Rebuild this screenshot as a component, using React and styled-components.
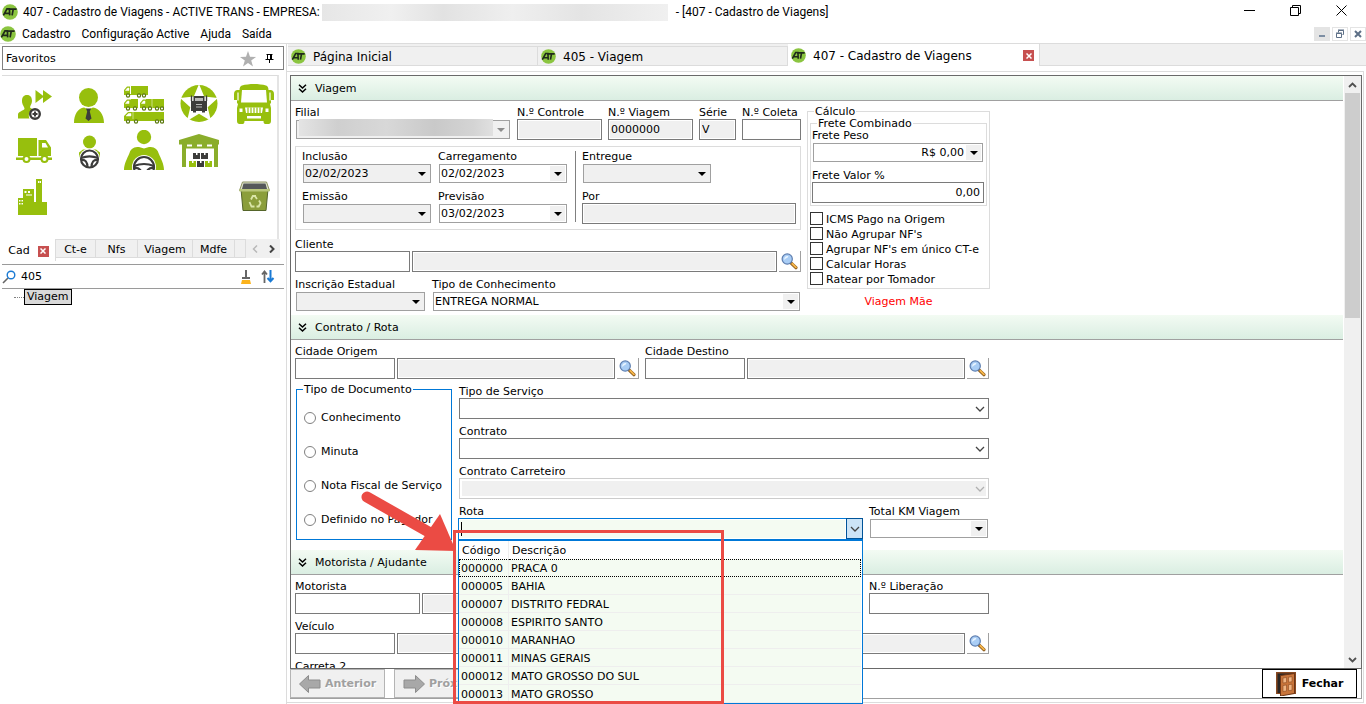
import React, { useState } from 'react'
import styled, { createGlobalStyle, css } from 'styled-components'

const GlobalStyle = createGlobalStyle`
  * {
    box-sizing: border-box;
  }
  body {
    margin: 0;
    background: #fff;
    color: #000;
    font-family: 'DejaVu Sans', Verdana, sans-serif;
    font-size: 11px;
    line-height: 14px;
    font-variant-ligatures: none;
  }
  button, input, select {
    font: inherit;
    color: inherit;
    border-radius: 0;
  }
  button {
    padding: 0;
    border: 0;
    background: none;
  }
`;

const Window = styled.div`
  position: relative;
  display: flex;
  flex-direction: column;
  height: 100vh;
  overflow: hidden;
`;

/* ---- title and menu ---- */

const TitleBar = styled.header`
  display: flex;
  align-items: center;
  height: 24px;
  padding-left: 2px;
  font-family: Roboto, 'Segoe UI', sans-serif;
  font-size: 12px;
  white-space: pre;
`;
const TitleText = styled.span`
  margin-left: 5px;
`;
const Redacted = styled.span`
  width: ${p => p.$width}px;
  height: 17px;
  margin: 0 8px 0 2px;
  background: linear-gradient(90deg, #e6e6e6, #f0f0f0 20%, #e2e2e2 35%, #efefef 55%, #e4e4e4 75%, #f0f0f0);
`;
const WindowButtons = styled.div`
  display: flex;
  align-self: flex-start;
  margin-left: auto;
  padding-right: 2px;
`;
const WindowButton = styled.button`
  display: flex;
  align-items: center;
  justify-content: center;
  width: 46px;
  height: 20px;
`;
const MenuBar = styled.nav`
  display: flex;
  align-items: center;
  height: 19px;
  font-family: Roboto, 'Segoe UI', sans-serif;
  font-size: 12px;
`;
const MenuItem = styled.button`
  margin-left: ${p => (p.$first ? 6 : 11)}px;
`;
const ChildButtons = styled.div`
  display: flex;
  gap: 2px;
  margin-left: auto;
`;
const ChildButton = styled.button`
  display: flex;
  align-items: center;
  justify-content: center;
  width: 16px;
  height: 14px;
  border: 1px solid #e4e4e4;
  background: ${p => (p.$filled ? '#e4e4e4' : '#fff')};
`;

const Body = styled.div`
  display: flex;
  flex: 1;
  min-height: 0;
  border-top: 1px solid #dcdcdc;
`;

/* ---- sidebar ---- */

const Sidebar = styled.aside`
  display: flex;
  flex-direction: column;
  flex: none;
  width: 287px;
  padding: 2px 2px 0;
  border-right: 1px solid #dcdcdc;
`;
const FavHeader = styled.div`
  display: flex;
  align-items: center;
  gap: 9px;
  width: 282px;
  height: 24px;
  padding: 1px 9px 0 3px;
  border: 1px solid #808080;

  span {
    flex: 1;
  }
`;
const IconPanel = styled.div`
  display: grid;
  grid-template-columns: repeat(5, 55px);
  grid-template-rows: repeat(3, 46px);
  width: 277px;
  height: 164px;
  margin-top: 5px;
  padding: 5px 0 0 4px;
  border-top: 1px solid #dcdcdc;
  border-right: 2px solid #e4e4e4;
`;
const FavButton = styled.button`
  display: flex;
  align-items: center;
  justify-content: center;
  grid-column: ${p => p.$col};
`;
const SideTabs = styled.div`
  display: flex;
  align-items: flex-start;
  height: 20px;
  width: 278px;
`;
const SideTab = styled.button`
  display: flex;
  align-items: center;
  justify-content: center;
  gap: 8px;
  height: ${p => (p.$active ? 22 : 19)}px;
  width: ${p => p.$width}px;
  padding-top: 2px;
  border: 1px solid #dcdcdc;
  border-width: ${p => (p.$active ? '0 1px 0 0' : '1px 1px 1px 0')};
  background: ${p => (p.$active ? '#fff' : '#f0f0f0')};
`;
const SideArrows = styled.div`
  display: flex;
  align-items: center;
  justify-content: space-around;
  flex: 1;
  height: 19px;
  background: #f0f0f0;
`;
const SearchBox = styled.label`
  display: flex;
  align-items: center;
  gap: 5px;
  width: 282px;
  height: 25px;
  margin-top: 5px;
  padding-right: 8px;
  border: 1px solid #9a9a9a;
  border-width: 1px 0;

  input {
    flex: 1;
    min-width: 0;
    padding: 0;
    border: 0;
    outline: 0;
  }
`;
const Tree = styled.div`
  display: flex;
  align-items: center;
  padding-left: 12px;

  &::before {
    content: '';
    width: 10px;
    border-top: 1px dotted #808080;
  }
`;
const TreeNode = styled.button`
  padding: 0 2px;
  border: 1px solid #000;
  background: #d9d9d9;
`;

/* ---- main panel ---- */

const Main = styled.main`
  display: flex;
  flex-direction: column;
  flex: 1;
  min-width: 0;
`;
const DocTabs = styled.div`
  display: flex;
  align-items: flex-start;
  flex: none;
  height: 22px;
  margin-left: 1px;
  background: #f0f0f0;
  border-bottom: 1px solid #dcdcdc;
`;
const DocTab = styled.button`
  display: flex;
  align-items: center;
  gap: 7px;
  width: ${p => (p.$active ? 252 : 250)}px;
  height: ${p => (p.$active ? 22 : 19)}px;
  margin-top: ${p => (p.$active ? 0 : 2)}px;
  padding: 1px 5px 0 3px;
  border: 1px solid #dcdcdc;
  border-width: ${p => (p.$active ? '0 1px 0 0' : '1px 1px 0 0')};
  background: ${p => (p.$active ? '#fff' : '#f0f0f0')};
  font-size: 12px;

  span {
    flex: 1;
    text-align: left;
  }
`;
const CloseMark = styled.i`
  display: flex;
  align-items: center;
  justify-content: center;
  width: 11px;
  height: 11px;
  background: #c75050;
`;
const Panel = styled.section`
  display: flex;
  flex-direction: column;
  flex: 1;
  min-height: 0;
  margin: 5px 2px 1px -1px;
  padding: 3px 1px 3px 3px;
  border: 1px solid #dcdcdc;
`;
const FormFrame = styled.div`
  display: flex;
  flex: 1;
  min-height: 0;
  border: 1px solid #696969;
`;
const FormScroll = styled.form`
  flex: 1;
  min-width: 0;
  overflow: hidden;
`;
const ScrollBar = styled.div`
  display: flex;
  flex-direction: column;
  width: 17px;
  margin-left: 1px;
  background: #f0f0f0;

  button {
    height: 17px;
  }
  div {
    height: 38%;
    margin: 0 1px auto;
    background: #cdcdcd;
  }
`;
const SectionHead = styled.h2`
  display: flex;
  align-items: center;
  gap: 8px;
  height: 25px;
  margin: 0;
  padding: 1px 0 0 7px;
  border-bottom: 1px solid #a0a0a0;
  background: linear-gradient(#f3fbf3, #daeee2);
  font-size: 11px;
  font-weight: normal;
`;
const SectionBody = styled.div`
  display: flex;
  flex-direction: column;
  gap: 5px;
  width: 702px;
  padding: 4px 4px ${p => p.$bottom || 0}px;
`;
const Row = styled.div`
  display: flex;
  gap: ${p => p.$gap ?? 6}px;
`;
const Column = styled.div`
  display: flex;
  flex-direction: column;
  align-self: flex-start;
  gap: 5px;
  width: ${p => (p.$width ? `${p.$width}px` : 'auto')};
  flex: ${p => (p.$width ? 'none' : 1)};
  min-width: 0;
`;
const FieldBox = styled.div`
  display: flex;
  flex-direction: column;
  width: ${p => (p.$width ? `${p.$width}px` : 'auto')};
  flex: ${p => (p.$width ? 'none' : '1 1 auto')};
  min-width: 0;

  label {
    position: relative;
    height: 14px;
    padding-top: 1px;
    white-space: nowrap;
  }
`;
const TextBox = styled.input`
  height: 21px;
  width: ${p => (p.$width ? `${p.$width}px` : '100%')};
  flex: ${p => (p.$width ? 'none' : '1 1 auto')};
  min-width: 0;
  padding: 0 3px;
  border: 1px solid #7a7a7a;
  background: #fff;
  text-align: ${p => (p.$right ? 'right' : 'left')};
  outline: 0;
  ${p => p.readOnly && css`
    padding: 0 2px;
    background: #f0f0f0;
    box-shadow: inset 0 0 0 1px #fff;
  `}
`;
const SelectFrame = styled.span`
  position: relative;
  display: block;
  height: ${p => (p.$native ? 21 : 19)}px;
  margin: ${p => (p.$native ? 0 : 1)}px;

  select {
    appearance: none;
    display: block;
    width: 100%;
    height: 100%;
    padding: 0 ${p => (p.$right ? 18 : 3)}px 0 1px;
    border: 1px solid ${p => (p.$native ? (p.$off ? '#cccccc' : '#7a7a7a') : '#a0a0a0')};
    background: ${p => (p.$off ? '#f0f0f0' : '#fff')};
    box-shadow: ${p => (p.$native && p.$off ? 'inset 0 0 0 2px #fff' : 'none')};
    text-align-last: ${p => (p.$right ? 'right' : 'left')};
    opacity: 1;
    outline: 0;
  }
`;
const DropMark = styled.span`
  position: absolute;
  top: 2px;
  right: 2px;
  bottom: 2px;
  display: flex;
  align-items: center;
  justify-content: center;
  width: 15px;
  background: ${p => (p.$plain ? 'none' : '#f0f0f0')};
  pointer-events: none;
`;
const Blurred = styled.span`
  position: absolute;
  top: -1px;
  left: 3px;
  right: 17px;
  height: 17px;
  background: linear-gradient(90deg, #e4e4e4, #cfcfcf 20%, #d8d8d8 45%, #c9c9c9 70%, #d4d4d4 90%, #e0e0e0);
`;
const LookupButton = styled.button`
  display: flex;
  align-items: center;
  justify-content: center;
  flex: none;
  width: 22px;
  height: 21px;
  border: 1px solid #a0a0a0;
  border-width: 0 1px 1px 0;
`;
const Box = styled.div`
  display: flex;
  gap: 6px;
  height: 84px;
  margin: 1px 0 2px;
  padding: 2px 4px 0 6px;
  border: 1px solid #dcdcdc;
`;
const Divider = styled.i`
  width: 1px;
  height: 71px;
  margin: 2px 0 0 1px;
  background: #808080;
`;
const Group = styled.fieldset`
  position: relative;
  min-width: 0;
  margin: ${p => p.$margin || 0};
  padding: ${p => p.$pad};
  border: 1px solid ${p => p.$color || '#dcdcdc'};

  > legend {
    position: absolute;
    top: -6px;
    left: 6px;
    padding: 0 1px;
    background: #fff;
    line-height: 12px;
    white-space: nowrap;
  }
`;
const CheckList = styled.div`
  margin-top: 6px;
`;
const CheckLine = styled.label`
  display: flex;
  align-items: flex-end;
  gap: 3px;
  height: 15px;
  white-space: nowrap;

  input {
    appearance: none;
    flex: none;
    align-self: flex-start;
    width: 13px;
    height: 13px;
    margin: 0;
    border: 1px solid #333;
    background: #fff;
  }
`;
const RadioLine = styled.label`
  display: flex;
  align-items: center;
  gap: 5px;
  height: 34px;
  white-space: nowrap;

  input {
    appearance: none;
    flex: none;
    width: 12px;
    height: 12px;
    margin: 0;
    border: 1px solid #808080;
    border-radius: 50%;
  }
`;
const RedNote = styled.div`
  margin-top: 6px;
  color: #ff0000;
  text-align: center;
`;

/* ---- route combo ---- */

const RouteArea = styled.div`
  margin-left: -1px;
`;
const RouteCombo = styled.div`
  display: flex;
  position: relative;
  height: 22px;
  border: 1px solid #0078d7;

  input {
    flex: 1;
    min-width: 0;
    padding: 0 2px;
    border: 1px solid #fff;
    background: #f4fbf2;
    outline: 0;
  }
  button {
    width: 17px;
    margin: -1px -1px 0 0;
    border: 1px solid #005499;
    background: #cce4f7;
  }
`;
const Caret = styled.i`
  position: absolute;
  top: 3px;
  left: 2px;
  width: 1px;
  height: 14px;
  background: #000;
`;
const Popup = styled.div`
  position: absolute;
  z-index: 2;
  width: 405px;
  border: 1px solid #0078d7;
  background: #fff;
`;
const PopupAnchor = styled.div`
  height: 0;
`;
const RouteTable = styled.table`
  width: 402px;
  border-collapse: separate;
  border-spacing: 0;
  table-layout: fixed;

  th, td {
    height: 18px;
    padding: 2px 2px 0;
    border-bottom: 1px solid #eeeeee;
    font-weight: normal;
    text-align: left;
    white-space: nowrap;
  }
  th {
    padding: 2px 3px 0;
    border-bottom-color: #fff;
  }
  th:first-child, td:first-child {
    width: 50px;
    border-right: 1px solid #eeeeee;
  }
  td {
    background: #f4fbf2;
  }
  tbody tr:first-child td {
    padding-top: 1px;
    border-top: 1px dotted #000;
    border-bottom: 1px dotted #000;
  }
  tbody tr:first-child td:first-child {
    border-left: 1px dotted #000;
    padding-left: 1px;
  }
  tbody tr:first-child td:last-child {
    border-right: 1px dotted #000;
  }
`;
const Highlight = styled.div`
  position: absolute;
  top: -11px;
  left: -6px;
  width: 271px;
  height: 174px;
  border: 3px solid #eb4b44;
  pointer-events: none;
`;
const ArrowDrawing = styled.svg`
  position: absolute;
  top: -53px;
  left: -102px;
  pointer-events: none;
`;

/* ---- footer ---- */

const Footer = styled.footer`
  display: flex;
  gap: 9px;
  flex: none;
  height: 30px;
  border: 1px solid #a0a0a0;
  border-width: 0 1px 1px 0;
`;
const FooterButton = styled.button`
  display: flex;
  align-items: center;
  justify-content: center;
  gap: 4px;
  width: 95px;
  height: 29px;
  font-weight: bold;
  ${p => p.$close
    ? css`
      gap: 6px;
      margin: 0 4px 0 auto;
      border: 1px solid #000;
      background: #fff;
    `
    : css`
      border: 1px solid #b4b4b4;
      background: #f0f0f0;
      color: #a0a0a0;
      text-shadow: 1px 1px 0 #fff;
    `}
`;

/* ---- drawings ---- */

const GREEN = '#97bf0d'
const DARK = '#3c3c3b'

const Logo = ({ size = 15 }) => (
  <svg width={size} height={size} viewBox="0 0 16 16" aria-hidden="true">
    <circle cx="8" cy="8" r="7.8" fill="#8bc540" />
    <path d="M1.4 11.4 5 4.8h2.4l.3 6.6M3 9.3h4.6M6.4 5.2h8.2M11.2 5.4l-1.1 6" fill="none" stroke="#1f2a1a" strokeWidth="1.7" />
  </svg>
)
const Chevron = ({ color = '#444', size = 10 }) => (
  <svg width={size} height={size / 2 + 1} viewBox="0 0 10 6" aria-hidden="true">
    <path d="M1 1l4 4 4-4" fill="none" stroke={color} strokeWidth="1.3" />
  </svg>
)
const Triangle = ({ color = '#000' }) => (
  <svg width="8" height="4" viewBox="0 0 8 4" aria-hidden="true">
    <path d="M0 0h8L4 4z" fill={color} />
  </svg>
)
const DoubleChevron = () => (
  <svg width="9" height="9" viewBox="0 0 9 9" aria-hidden="true">
    <path d="M1 .8l3.5 3.2L8 .8M1 4.8L4.5 8 8 4.8" fill="none" stroke="#000" strokeWidth="1.5" />
  </svg>
)
const Cross = () => (
  <CloseMark>
    <svg width="6" height="6" viewBox="0 0 6 6" aria-hidden="true">
      <path d="M.5.5l5 5M5.5.5l-5 5" stroke="#fff" strokeWidth="1.5" />
    </svg>
  </CloseMark>
)
const Magnifier = () => (
  <svg width="17" height="17" viewBox="0 0 18 18" aria-hidden="true">
    <path d="M10.8 10.6l5 5" stroke="#8a5a1c" strokeWidth="3.4" strokeLinecap="round" />
    <path d="M12 11.4l3.8 3.8" stroke="#f5b54a" strokeWidth="2" strokeLinecap="round" />
    <circle cx="6.6" cy="6.4" r="5.4" fill="#a9cdf5" stroke="#5f7fb0" strokeWidth="1.3" />
    <path d="M3.4 6.8a3.3 3.3 0 0 1 4-3.6c1 .4-.4 2-1.6 2.4S4 7.6 3.4 6.8z" fill="#e8f4ff" />
  </svg>
)
const FavIcon = ({ children }) => (
  <svg width="40" height="40" viewBox="0 0 40 40" fill={GREEN} aria-hidden="true">{children}</svg>
)
const Wheels = ({ at, y, r = 1.6 }) => at.map(x => (
  <circle key={x} cx={x} cy={y} r={r} fill="#fff" stroke="#5d7a10" strokeWidth="1.2" />
))
const SteeringWheel = ({ cx, cy, r }) => (
  <g fill="none" stroke={DARK} strokeWidth="2.2">
    <circle cx={cx} cy={cy} r={r + 2} fill="#fff" stroke="none" />
    <circle cx={cx} cy={cy} r={r} fill="#fff" />
    <path d={`M${cx - r} ${cy - 1}Q${cx} ${cy - r / 2} ${cx + r} ${cy - 1}M${cx - r} ${cy + 1}Q${cx - 2} ${cy} ${cx - 2} ${cy + r}M${cx + r} ${cy + 1}Q${cx + 2} ${cy} ${cx + 2} ${cy + r}`} />
  </g>
)

const favorites = [
  { name: 'Novo cliente', col: 1, art: (
    <FavIcon>
      <path d="M13 11c3.5 0 5 2.6 5 6 0 3-1.8 4.3-2 6.5l3 2c-4 2-5 6-3.5 9H4v-4c0-3 5-3.5 6.5-5.5C10.5 22.5 8 21 8 17c0-3.5 1.5-6 5-6z" />
      <path d="M21.5 6l8.5 6.5-8.5 6.5zM29 6l9 6.5-9 6.5z" />
      <circle cx="21" cy="30" r="4.8" fill="#fff" stroke={DARK} strokeWidth="2.4" />
      <path d="M18.5 30h5M21 27.5v5" stroke={DARK} strokeWidth="2" />
    </FavIcon>
  ) },
  { name: 'Funcionário', col: 2, art: (
    <FavIcon>
      <circle cx="19.5" cy="13.5" r="9.5" />
      <path d="M5 39c0-9 4-14.5 10-15.5l4.5 2 4.5-2c6 1 11 6.5 11 15.5z" />
      <path d="M17 24.5h5l-1.2 3 1.7 7-3 2.5-3-2.5 1.7-7z" fill={DARK} />
    </FavIcon>
  ) },
  { name: 'Frota', col: 3, art: (
    <FavIcon>
      <path d="M7 2h17v9H0V6l3-3.5h3V10h1zM7 15h7v9H0v-5l3-3.5h4zM22 15h18v9H16v-5l3-3.5h3zM8 28h32v9H0v-5l4-4z" />
      <path d="M1.5 6.5L3.5 4H5v2.500zM1.5 19.5l2-2.5H5v2.500zM17.5 19.5l2-2.5H21v2.500zM2 32l2.5-2.5H7V32zM28 15v9M9 28v7" fill="#fff" stroke="#fff" strokeWidth=".5" />
      <Wheels at={[4, 15, 20]} y={11.5} />
      <Wheels at={[4, 11, 20, 26, 33, 38]} y={24.5} />
      <Wheels at={[4, 12, 33, 38]} y={37.5} />
    </FavIcon>
  ) },
  { name: 'Veículos', col: 4, art: (
    <FavIcon>
      <circle cx="20" cy="19.5" r="18.5" />
      <path d="M20 0l5.2 12.6L39 14l-10.3 9.2L32 37l-12-7.3L8 37l3.3-13.800L1 14l13.8-1.4z" fill="#fff" />
      <path d="M14.5 12h11v5H28v10h-2v1.5h-3V27h-6v1.5h-3V27h-2V17h2.500z" fill={DARK} />
      <path d="M16 14h8v3h-8zM17 20h6v1h-6zM17 22.5h6v1h-6z" fill="#b9b9b9" />
      <path d="M12.5 11.5v5.5M27.5 11.5v5.5" stroke={DARK} strokeWidth="1.4" />
    </FavIcon>
  ) },
  { name: 'Ônibus', col: 5, art: (
    <FavIcon>
      <path d="M8 1.5C15-.5 25-.5 32 1.5c1.5.5 2.5 2 2.5 4.5h2c2 0 3.5 1.5 3.5 4v6h-3v3l-1 1 1 4v13c0 2-1 3-2.5 3h-3c-1.5 0-2-1-2-3H10.500c0 2-.5 3-2 3h-3C4 40 3 39 3 37V24l1-4-1-1v-3H0v-6c0-2.5 1.5-4 3.5-4h2C5.5 3.5 6.5 2 8 1.500z" />
      <path d="M8 6h24l1 12.5H7z" fill="#fff" />
      <path d="M4 8.5v8M36 8.5v8" stroke="#fff" strokeWidth="1.2" />
      <path d="M11 23.5h18l-1 5.5H12z" fill="#fff" />
      <path d="M14 23.5V29M17 23.5V29M20 23.5V29M23 23.5V29M26 23.5V29" stroke={GREEN} strokeWidth="1.2" />
      <path d="M5.5 24.5h3v3.5h-3zM31.5 24.5h3v3.5h-3zM13 32h14v2.5H13z" fill="#fff" />
    </FavIcon>
  ) },
  { name: 'Entrega', col: 1, art: (
    <FavIcon>
      <path d="M4 8h19v18H4zM24.5 10H32l5 7.5V26H24.500zM2 27.5h36V30H2z" />
      <path d="M28 13h3.5l2.5 4.5h-6z" fill="#fff" />
      <circle cx="12.5" cy="29" r="3" fill="#fff" stroke={GREEN} strokeWidth="2" />
      <circle cx="30.5" cy="29" r="3" fill="#fff" stroke={GREEN} strokeWidth="2" />
    </FavIcon>
  ) },
  { name: 'Motorista', col: 2, art: (
    <FavIcon>
      <circle cx="20.5" cy="12" r="6.5" />
      <path d="M10 27.5v-5l4-3h13l4 3v5z" />
      <SteeringWheel cx={20.5} cy={29} r={8.5} />
    </FavIcon>
  ) },
  { name: 'Condutor', col: 3, art: (
    <FavIcon>
      <circle cx="20" cy="7" r="7.2" />
      <path d="M0 40C0 34 3 29 5.5 23c1.5-5 5-6 9.5-6l5 1.5 5-1.5c4.5 0 8 1 9.5 6C37 29 40 34 40 40z" />
      <SteeringWheel cx={20} cy={37} r={10} />
    </FavIcon>
  ) },
  { name: 'Armazém', col: 4, art: (
    <FavIcon>
      <path d="M0 14.5V10L20 4l20 6v4.5h-1V37h-4V18.5H7V37H3V14.500z" fill="#8aad2b" />
      <path d="M8 14.5h5v2H8zM18 14.5h5v2h-5zM28 14.5h5v2h-5z" fill="#fff" />
      <path d="M14 23h7v6h-7zM22 23h7v6h-7zM18 31h7v6h-7z" fill={DARK} />
      <path d="M10 31h7v6h-7zM26 31h7v6h-7z" />
      <path d="M17 23h1.5v2H17zM25 23h1.5v2H25zM13 31h1.5v2H13zM21 31h1.5v2H21zM29 31h1.5v2H29z" fill="#fff" />
    </FavIcon>
  ) },
  { name: 'Empresa', col: 1, art: (
    <FavIcon>
      <path d="M4 22h5v-9h11v13h2V3h6v23h5v13H4z" />
      <path d="M10.5 15h2v2h-2zM14 15h2v2h-2zM12 18.5h6v1h-6zM24 5h1.5v2H24zM26 5h1v2h-1zM5 24h1.5v1.5H5zM7.5 24H9v1.5H7.500zM5 27h1.5v1.5H5zM7.5 27H9v1.5H7.500z" fill="#fff" />
    </FavIcon>
  ) },
  { name: 'Lixeira', col: 5, art: (
    <FavIcon>
      <path d="M7 13h27l-2 21.5H9z" fill="#8b9e3b" stroke="#55652a" />
      <path d="M8.5 6h24l3 8.5h-30z" fill="#dfe3cc" stroke="#8a9160" />
      <path d="M9.5 7.5h22l1.5 5.5H8z" fill="#55585a" />
      <path d="M5.5 13h30v2.5h-30z" fill="#b9c77a" />
      <path d="M20.5 19.5l2.5 3.5M17 23.5l1.8-3.5h3.2M15.5 26l2 4.5h3M22.5 30.5h2.2l1.8-3.5-1.5-2.5" fill="none" stroke="#dbe6a9" strokeWidth="1.8" />
    </FavIcon>
  ) },
]

/* ---- form pieces ---- */

const Field = ({ id, label, width, children }) => (
  <FieldBox $width={width}>
    <label htmlFor={id}>{label}</label>
    {children}
  </FieldBox>
)
const Select = ({ id, value = '', off, native, right, blurred }) => (
  <SelectFrame $off={off} $native={native} $right={right}>
    <select id={id} disabled={native && off} defaultValue={value}>
      <option value={value}>{value}</option>
    </select>
    {blurred && <Blurred />}
    <DropMark $plain={native}>
      {native ? <Chevron color={off ? '#b0b0b0' : '#444'} /> : <Triangle color={blurred ? '#8c8c8c' : '#000'} />}
    </DropMark>
  </SelectFrame>
)
const Lookup = ({ id, label, codeWidth }) => (
  <Row $gap={2}>
    <TextBox id={id} $width={codeWidth} />
    <TextBox readOnly aria-label={`${label} descrição`} />
    <LookupButton type="button" aria-label={`Pesquisar ${label}`}><Magnifier /></LookupButton>
  </Row>
)
const Section = ({ title, bottom, children }) => (
  <section>
    <SectionHead><DoubleChevron />{title}</SectionHead>
    <SectionBody $bottom={bottom}>{children}</SectionBody>
  </section>
)

const routes = [
  ['000000', 'PRACA 0'],
  ['000005', 'BAHIA'],
  ['000007', 'DISTRITO FEDRAL'],
  ['000008', 'ESPIRITO SANTO'],
  ['000010', 'MARANHAO'],
  ['000011', 'MINAS GERAIS'],
  ['000012', 'MATO GROSSO DO SUL'],
  ['000013', 'MATO GROSSO'],
]
const checks = ['ICMS Pago na Origem', "Não Agrupar NF's", "Agrupar NF's em único CT-e", 'Calcular Horas', 'Ratear por Tomador']
const documents = ['Conhecimento', 'Minuta', 'Nota Fiscal de Serviço', 'Definido no Pagador']

const RoutePopup = ({ onPick }) => (
  <PopupAnchor>
    <Popup>
      <RouteTable>
        <thead>
          <tr><th>Código</th><th>Descrição</th></tr>
        </thead>
        <tbody>
          {routes.map(([code, name]) => (
            <tr key={code} onClick={() => onPick(name)}><td>{code}</td><td>{name}</td></tr>
          ))}
        </tbody>
      </RouteTable>
      <Highlight />
      <ArrowDrawing width="104" height="70" viewBox="0 0 104 70" aria-hidden="true">
        <path d="M10 9L76 46.5" stroke="#eb4b44" strokeWidth="11" strokeLinecap="round" />
        <path d="M83 26l16 37-41-1z" fill="#eb4b44" />
      </ArrowDrawing>
    </Popup>
  </PopupAnchor>
)

const SidePanel = () => (
  <Sidebar>
    <FavHeader>
      <span>Favoritos</span>
      <svg width="16" height="16" viewBox="0 0 16 16" aria-hidden="true">
        <path d="M8 0l2 5.8 6 .1-4.8 3.7 1.8 6L8 12l-5 3.6 1.8-6L0 5.9l6-.1z" fill="#b0b0b0" />
      </svg>
      <svg width="9" height="9" viewBox="0 0 9 9" aria-hidden="true">
        <path d="M1.5.5h6M2.5.5v5M5.5.5v5M6.5.5v5M.5 5.5h8M4.5 5.5V9" stroke="#000" fill="none" />
      </svg>
    </FavHeader>
    <IconPanel>
      {favorites.map(f => (
        <FavButton key={f.name} type="button" aria-label={f.name} $col={f.col}>{f.art}</FavButton>
      ))}
    </IconPanel>
    <SideTabs>
      <SideTab $active $width={54}>Cad <Cross /></SideTab>
      <SideTab $width={40}>Ct-e</SideTab>
      <SideTab $width={42}>Nfs</SideTab>
      <SideTab $width={55}>Viagem</SideTab>
      <SideTab $width={42}>Mdfe</SideTab>
      <SideTab $width={11} aria-label="Mais" />
      <SideArrows>
        <svg width="6" height="8" viewBox="0 0 6 8" aria-hidden="true"><path d="M5 .5L1.5 4 5 7.5" fill="none" stroke="#b8b8b8" strokeWidth="1.5" /></svg>
        <svg width="6" height="8" viewBox="0 0 6 8" aria-hidden="true"><path d="M1 .5L4.5 4 1 7.5" fill="none" stroke="#444" strokeWidth="2" /></svg>
      </SideArrows>
    </SideTabs>
    <SearchBox>
      <svg width="14" height="14" viewBox="0 0 14 14" aria-hidden="true">
        <path d="M1 13l5-5" stroke="#666" strokeWidth="1.6" />
        <circle cx="9" cy="5" r="3.8" fill="#fff" stroke="#1a7ad4" strokeWidth="1.4" />
      </svg>
      <input defaultValue="405" aria-label="Pesquisar menu" />
      <svg width="10" height="14" viewBox="0 0 10 14" aria-hidden="true">
        <path d="M5 0v7" stroke="#666" strokeWidth="2" />
        <path d="M1 7h8v2H1z" fill="#666" />
        <path d="M1 10h8l1 4H0z" fill="#fbb31c" />
      </svg>
      <svg width="20" height="13" viewBox="0 0 20 13" aria-hidden="true">
        <path d="M8.5 13V2M6 4.5L8.5 1.5 11 4.5" fill="none" stroke="#666" strokeWidth="1.8" />
        <path d="M14.5 0v11M11.5 8l3 3.2 3-3.2" fill="none" stroke="#1a7ad4" strokeWidth="2" />
      </svg>
    </SearchBox>
    <Tree><TreeNode type="button">Viagem</TreeNode></Tree>
  </Sidebar>
)

const TripSection = () => (
  <Section title="Viagem" bottom={3}>
    <Row>
      <Column $width={506}>
        <Row>
          <Field id="filial" label="Filial" width={216}><Select id="filial" off blurred /></Field>
          <Field id="controle" label="N.º Controle" width={85}><TextBox id="controle" readOnly /></Field>
          <Field id="viagem" label="N.º Viagem" width={85}><TextBox id="viagem" readOnly value="0000000" /></Field>
          <Field id="serie" label="Série" width={37}><TextBox id="serie" readOnly value="V" /></Field>
          <Field id="coleta" label="N.º Coleta" width={59}><TextBox id="coleta" /></Field>
        </Row>
        <Box>
          <Column $width={130}>
            <Field id="inclusao" label="Inclusão"><Select id="inclusao" value="02/02/2023" off /></Field>
            <Field id="emissao" label="Emissão"><Select id="emissao" off /></Field>
          </Column>
          <Column $width={130}>
            <Field id="carregamento" label="Carregamento"><Select id="carregamento" value="02/02/2023" /></Field>
            <Field id="previsao" label="Previsão"><Select id="previsao" value="03/02/2023" /></Field>
          </Column>
          <Divider />
          <Column>
            <Field id="entregue" label="Entregue" width={130}><Select id="entregue" off /></Field>
            <Field id="por" label="Por"><TextBox id="por" readOnly /></Field>
          </Column>
        </Box>
        <Field id="cliente" label="Cliente"><Lookup id="cliente" label="Cliente" codeWidth={115} /></Field>
        <Row>
          <Field id="inscricao" label="Inscrição Estadual" width={131}><Select id="inscricao" off /></Field>
          <Field id="tipo-con" label="Tipo de Conhecimento"><Select id="tipo-con" value="ENTREGA NORMAL" /></Field>
        </Row>
      </Column>
      <div>
        <Group $margin="6px 0 0" $pad="11px 2px 1px">
          <legend>Cálculo</legend>
          <Group $pad="4px 2px 2px 1px">
            <legend>Frete Combinado</legend>
            <Column $width={172}>
              <Field id="frete-peso" label="Frete Peso"><Select id="frete-peso" value="R$ 0,00" right /></Field>
              <Field id="frete-valor" label="Frete Valor %"><TextBox id="frete-valor" defaultValue="0,00" $right /></Field>
            </Column>
          </Group>
          <CheckList>
            {checks.map(text => (
              <CheckLine key={text}><input type="checkbox" />{text}</CheckLine>
            ))}
          </CheckList>
        </Group>
        <RedNote>Viagem Mãe</RedNote>
      </div>
    </Row>
  </Section>
)

const ContractSection = () => {
  const [route, setRoute] = useState('')
  const [open, setOpen] = useState(true)
  const pick = name => {
    setRoute(name)
    setOpen(false)
  }

  return (
    <Section title="Contrato / Rota" bottom={10}>
      <Row>
        <Field id="origem" label="Cidade Origem" width={344}><Lookup id="origem" label="Cidade Origem" codeWidth={100} /></Field>
        <Field id="destino" label="Cidade Destino" width={344}><Lookup id="destino" label="Cidade Destino" codeWidth={100} /></Field>
      </Row>
      <Row>
        <Column $width={158}>
          <Group $margin="5px 1px 0" $pad="11px 0 2px 7px" $color="#0078d7">
            <legend>Tipo de Documento</legend>
            {documents.map(text => (
              <RadioLine key={text}><input type="radio" name="documento" />{text}</RadioLine>
            ))}
          </Group>
        </Column>
        <Column>
          <Field id="servico" label="Tipo de Serviço"><Select id="servico" native /></Field>
          <Field id="contrato" label="Contrato"><Select id="contrato" native /></Field>
          <Field id="carreteiro" label="Contrato Carreteiro"><Select id="carreteiro" native off /></Field>
          <Row>
            <Field id="rota" label="Rota" width={404}>
              <RouteArea>
                <RouteCombo>
                  <input id="rota" role="combobox" aria-expanded={open} value={route} onChange={e => setRoute(e.target.value)} />
                  {!route && <Caret />}
                  <button type="button" aria-label="Abrir rotas" onClick={() => setOpen(!open)}><Chevron /></button>
                </RouteCombo>
                {open && <RoutePopup onPick={pick} />}
              </RouteArea>
            </Field>
            <Field id="km" label="Total KM Viagem"><Select id="km" /></Field>
          </Row>
        </Column>
      </Row>
    </Section>
  )
}

const DriverSection = () => (
  <Section title="Motorista / Ajudante">
    <Row>
      <Field id="motorista" label="Motorista" width={568}><Lookup id="motorista" label="Motorista" codeWidth={125} /></Field>
      <Field id="liberacao" label="N.º Liberação" width={120}><TextBox id="liberacao" /></Field>
    </Row>
    <Field id="veiculo" label="Veículo"><Lookup id="veiculo" label="Veículo" codeWidth={100} /></Field>
    <Field id="carreta2" label="Carreta 2"><Lookup id="carreta2" label="Carreta 2" codeWidth={100} /></Field>
  </Section>
)

const App = () => {
  return (
    <Window>
      <GlobalStyle />
      <TitleBar>
        <Logo size={16} />
        <TitleText>407 - Cadastro de Viagens - ACTIVE TRANS - EMPRESA:</TitleText>
        <Redacted $width={346} />
        <span>- [407 - Cadastro de Viagens]</span>
        <WindowButtons>
          <WindowButton aria-label="Minimizar"><svg width="11" height="11" viewBox="0 0 11 11"><path d="M0 5.5h11" stroke="#000" /></svg></WindowButton>
          <WindowButton aria-label="Restaurar"><svg width="11" height="11" viewBox="0 0 11 11"><path d="M.5 2.5h8v8h-8zM2.5 2.5v-2h8v8h-2" fill="none" stroke="#000" /></svg></WindowButton>
          <WindowButton aria-label="Fechar janela"><svg width="11" height="11" viewBox="0 0 11 11"><path d="M.5.5l10 10M10.5.5l-10 10" stroke="#000" /></svg></WindowButton>
        </WindowButtons>
      </TitleBar>
      <MenuBar>
        <Logo size={16} />
        <MenuItem $first>Cadastro</MenuItem>
        <MenuItem>Configuração Active</MenuItem>
        <MenuItem>Ajuda</MenuItem>
        <MenuItem>Saída</MenuItem>
        <ChildButtons>
          <ChildButton $filled aria-label="Minimizar formulário"><svg width="8" height="8" viewBox="0 0 8 8"><path d="M1 6h6" stroke="#7d8ea3" strokeWidth="2" /></svg></ChildButton>
          <ChildButton aria-label="Restaurar formulário"><svg width="8" height="9" viewBox="0 0 8 9"><path d="M.5 4.5h5v4h-5zM2.5 3.5v-2h5v4h-1M2 1h6M0 4h6" fill="none" stroke="#5d6f86" /></svg></ChildButton>
          <ChildButton aria-label="Fechar formulário"><svg width="8" height="8" viewBox="0 0 8 8"><path d="M1 1l6 6M7 1L1 7" stroke="#5d6f86" strokeWidth="2" /></svg></ChildButton>
        </ChildButtons>
      </MenuBar>
      <Body>
        <SidePanel />
        <Main>
          <DocTabs>
            <DocTab><Logo /><span>Página Inicial</span></DocTab>
            <DocTab><Logo /><span>405 - Viagem</span></DocTab>
            <DocTab $active><Logo /><span>407 - Cadastro de Viagens</span><Cross /></DocTab>
          </DocTabs>
          <Panel>
            <FormFrame>
              <FormScroll>
                <TripSection />
                <ContractSection />
                <DriverSection />
              </FormScroll>
              <ScrollBar>
                <button type="button" aria-label="Rolar para cima"><svg width="9" height="6" viewBox="0 0 9 6"><path d="M1 5l3.5-3.5L8 5" fill="none" stroke="#505050" strokeWidth="1.8" /></svg></button>
                <div />
                <button type="button" aria-label="Rolar para baixo"><svg width="9" height="6" viewBox="0 0 9 6"><path d="M1 1l3.5 3.5L8 1" fill="none" stroke="#505050" strokeWidth="1.8" /></svg></button>
              </ScrollBar>
            </FormFrame>
            <Footer>
              <FooterButton type="button">
                <svg width="22" height="18" viewBox="0 0 22 18" aria-hidden="true"><path d="M.5 9l9-8.5V5H21v8H9.500v4.5z" fill="#a8a8a8" stroke="#8c8c8c" /></svg>
                Anterior
              </FooterButton>
              <FooterButton type="button">
                <svg width="22" height="18" viewBox="0 0 22 18" aria-hidden="true"><path d="M21.5 9l-9-8.5V5H1v8h11.5v4.5z" fill="#a8a8a8" stroke="#8c8c8c" /></svg>
                Próximo
              </FooterButton>
              <FooterButton type="button" $close>
                <svg width="20" height="24" viewBox="0 0 20 24" aria-hidden="true">
                  <path d="M0 0h20v22H0z" fill="#8a4a22" />
                  <path d="M1.5 1.5h17V21h-17z" fill="#2a2624" />
                  <path d="M4.5 3.5L18.5 1.5v20l-14 2.500z" fill="#c8743a" stroke="#6d3515" />
                  <path d="M7 6l3.5-.5v5L7 11zM12.5 5.2l3.5-.5v5l-3.5.5zM7 13.5l3.5-.5v6l-3.5.5zM12.5 12.7l3.5-.5v6l-3.5.5z" fill="#f0b482" stroke="#8a4a22" strokeWidth=".6" />
                </svg>
                Fechar
              </FooterButton>
            </Footer>
          </Panel>
        </Main>
      </Body>
    </Window>
  )
}

export default App
